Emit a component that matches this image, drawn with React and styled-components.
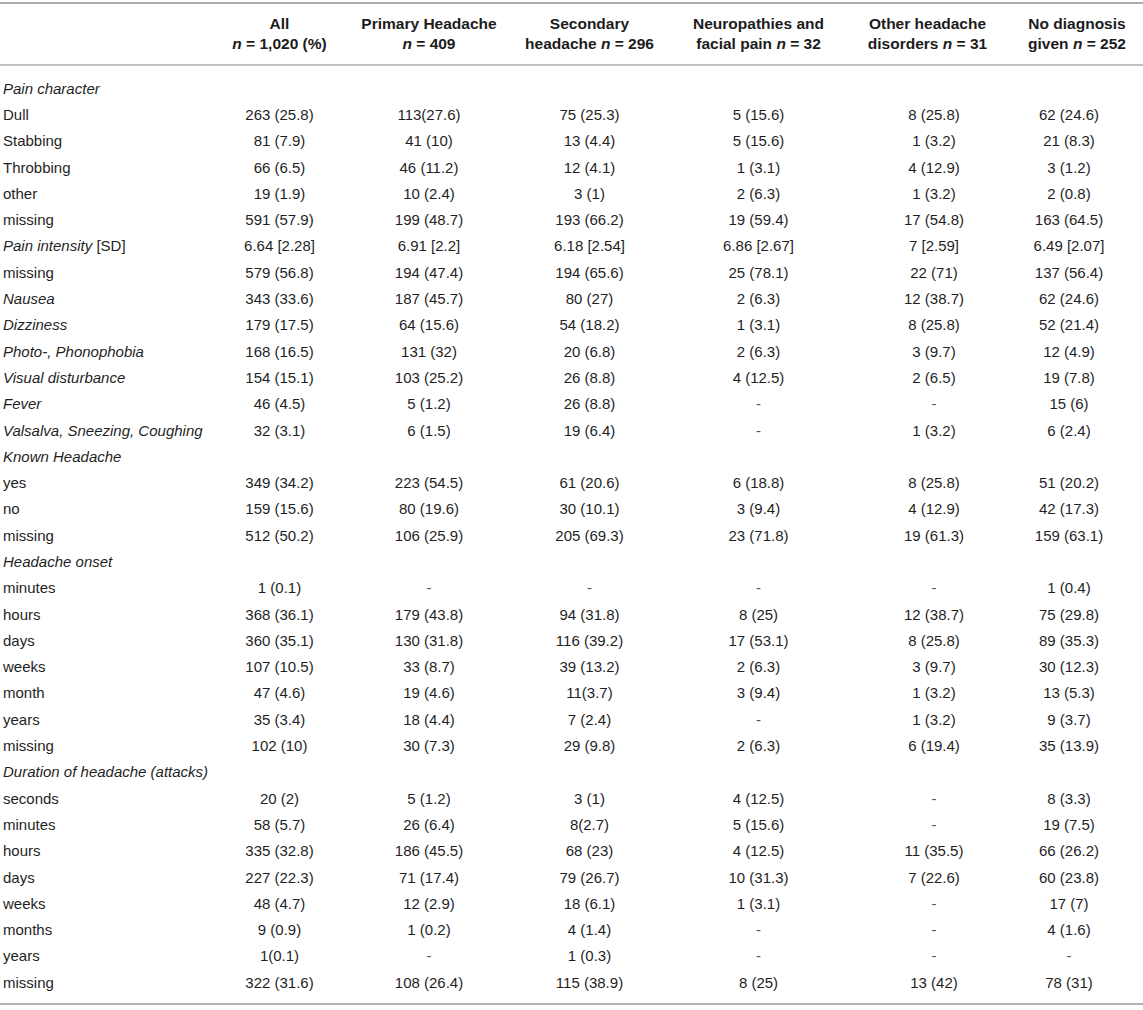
import React from 'react';
import styled, { createGlobalStyle } from 'styled-components';

const GlobalStyle = createGlobalStyle`
  html, body {
    margin: 0;
    padding: 0;
    background: #ffffff;
  }
  body {
    font-family: "Liberation Sans", Arial, sans-serif;
    color: #1f1f1f;
  }
`;

const COLS = '207px 145px 154px 167px 171px 167px 132px';
const NUDGE = [0, 0, 0, 0, 6.5, -8];

const Page = styled.div`
  width: 1143px;
  padding-top: 2px;
`;

const Table = styled.div`
  border-top: 2px solid #ababab;
  border-bottom: 2px solid #b3b3b3;
`;

const HeadRow = styled.div`
  display: grid;
  grid-template-columns: ${COLS};
  padding: 10px 0;
  border-bottom: 2px solid #c2c2c2;
`;

const HeadCell = styled.div`
  font-weight: bold;
  font-size: 15.5px;
  line-height: 20px;
  text-align: center;
  white-space: nowrap;
  color: #1c1c1c;
`;

const Body = styled.div`
  padding: 9px 0 8px;
`;

const Row = styled.div`
  display: grid;
  grid-template-columns: ${COLS};
  height: 26.3px;
  align-items: center;
  font-size: 15px;
`;

const Label = styled.div`
  padding-left: 3px;
  white-space: nowrap;
  font-style: ${p => (p.$italic ? 'italic' : 'normal')};
`;

const Plain = styled.span`
  font-style: normal;
`;

const Cell = styled.div`
  text-align: center;
  white-space: nowrap;
  padding-left: ${p => Math.max(p.$nudge, 0) * 2}px;
  padding-right: ${p => Math.max(-p.$nudge, 0) * 2}px;
  color: ${p => (p.$dash ? '#555' : '#1f1f1f')};
`;

const N = () => <i>n</i>;

const headers = [
  <>All<br /><N /> = 1,020 (%)</>,
  <>Primary Headache<br /><N /> = 409</>,
  <>Secondary<br />headache <N /> = 296</>,
  <>Neuropathies and<br />facial pain <N /> = 32</>,
  <>Other headache<br />disorders <N /> = 31</>,
  <>No diagnosis<br />given <N /> = 252</>,
];

const rows = [
  { label: 'Pain character', italic: true },
  { label: 'Dull', v: ['263 (25.8)', '113(27.6)', '75 (25.3)', '5 (15.6)', '8 (25.8)', '62 (24.6)'] },
  { label: 'Stabbing', v: ['81 (7.9)', '41 (10)', '13 (4.4)', '5 (15.6)', '1 (3.2)', '21 (8.3)'] },
  { label: 'Throbbing', v: ['66 (6.5)', '46 (11.2)', '12 (4.1)', '1 (3.1)', '4 (12.9)', '3 (1.2)'] },
  { label: 'other', v: ['19 (1.9)', '10 (2.4)', '3 (1)', '2 (6.3)', '1 (3.2)', '2 (0.8)'] },
  { label: 'missing', v: ['591 (57.9)', '199 (48.7)', '193 (66.2)', '19 (59.4)', '17 (54.8)', '163 (64.5)'] },
  { label: 'Pain intensity', suffix: ' [SD]', italic: true, v: ['6.64 [2.28]', '6.91 [2.2]', '6.18 [2.54]', '6.86 [2.67]', '7 [2.59]', '6.49 [2.07]'] },
  { label: 'missing', v: ['579 (56.8)', '194 (47.4)', '194 (65.6)', '25 (78.1)', '22 (71)', '137 (56.4)'] },
  { label: 'Nausea', italic: true, v: ['343 (33.6)', '187 (45.7)', '80 (27)', '2 (6.3)', '12 (38.7)', '62 (24.6)'] },
  { label: 'Dizziness', italic: true, v: ['179 (17.5)', '64 (15.6)', '54 (18.2)', '1 (3.1)', '8 (25.8)', '52 (21.4)'] },
  { label: 'Photo-, Phonophobia', italic: true, v: ['168 (16.5)', '131 (32)', '20 (6.8)', '2 (6.3)', '3 (9.7)', '12 (4.9)'] },
  { label: 'Visual disturbance', italic: true, v: ['154 (15.1)', '103 (25.2)', '26 (8.8)', '4 (12.5)', '2 (6.5)', '19 (7.8)'] },
  { label: 'Fever', italic: true, v: ['46 (4.5)', '5 (1.2)', '26 (8.8)', '-', '-', '15 (6)'] },
  { label: 'Valsalva, Sneezing, Coughing', italic: true, v: ['32 (3.1)', '6 (1.5)', '19 (6.4)', '-', '1 (3.2)', '6 (2.4)'] },
  { label: 'Known Headache', italic: true },
  { label: 'yes', v: ['349 (34.2)', '223 (54.5)', '61 (20.6)', '6 (18.8)', '8 (25.8)', '51 (20.2)'] },
  { label: 'no', v: ['159 (15.6)', '80 (19.6)', '30 (10.1)', '3 (9.4)', '4 (12.9)', '42 (17.3)'] },
  { label: 'missing', v: ['512 (50.2)', '106 (25.9)', '205 (69.3)', '23 (71.8)', '19 (61.3)', '159 (63.1)'] },
  { label: 'Headache onset', italic: true },
  { label: 'minutes', v: ['1 (0.1)', '-', '-', '-', '-', '1 (0.4)'] },
  { label: 'hours', v: ['368 (36.1)', '179 (43.8)', '94 (31.8)', '8 (25)', '12 (38.7)', '75 (29.8)'] },
  { label: 'days', v: ['360 (35.1)', '130 (31.8)', '116 (39.2)', '17 (53.1)', '8 (25.8)', '89 (35.3)'] },
  { label: 'weeks', v: ['107 (10.5)', '33 (8.7)', '39 (13.2)', '2 (6.3)', '3 (9.7)', '30 (12.3)'] },
  { label: 'month', v: ['47 (4.6)', '19 (4.6)', '11(3.7)', '3 (9.4)', '1 (3.2)', '13 (5.3)'] },
  { label: 'years', v: ['35 (3.4)', '18 (4.4)', '7 (2.4)', '-', '1 (3.2)', '9 (3.7)'] },
  { label: 'missing', v: ['102 (10)', '30 (7.3)', '29 (9.8)', '2 (6.3)', '6 (19.4)', '35 (13.9)'] },
  { label: 'Duration of headache (attacks)', italic: true },
  { label: 'seconds', v: ['20 (2)', '5 (1.2)', '3 (1)', '4 (12.5)', '-', '8 (3.3)'] },
  { label: 'minutes', v: ['58 (5.7)', '26 (6.4)', '8(2.7)', '5 (15.6)', '-', '19 (7.5)'] },
  { label: 'hours', v: ['335 (32.8)', '186 (45.5)', '68 (23)', '4 (12.5)', '11 (35.5)', '66 (26.2)'] },
  { label: 'days', v: ['227 (22.3)', '71 (17.4)', '79 (26.7)', '10 (31.3)', '7 (22.6)', '60 (23.8)'] },
  { label: 'weeks', v: ['48 (4.7)', '12 (2.9)', '18 (6.1)', '1 (3.1)', '-', '17 (7)'] },
  { label: 'months', v: ['9 (0.9)', '1 (0.2)', '4 (1.4)', '-', '-', '4 (1.6)'] },
  { label: 'years', v: ['1(0.1)', '-', '1 (0.3)', '-', '-', '-'] },
  { label: 'missing', v: ['322 (31.6)', '108 (26.4)', '115 (38.9)', '8 (25)', '13 (42)', '78 (31)'] },
];

export default function App() {
  return (
    <Page>
      <GlobalStyle />
      <Table>
        <HeadRow>
          <div />
          {headers.map((h, i) => (
            <HeadCell key={i}>{h}</HeadCell>
          ))}
        </HeadRow>
        <Body>
          {rows.map((r, i) => (
            <Row key={i}>
              <Label $italic={r.italic}>
                {r.label}
                {r.suffix && <Plain>{r.suffix}</Plain>}
              </Label>
              {(r.v || ['', '', '', '', '', '']).map((val, j) => (
                <Cell key={j} $nudge={NUDGE[j]} $dash={val === '-'}>{val}</Cell>
              ))}
            </Row>
          ))}
        </Body>
      </Table>
    </Page>
  );
}
